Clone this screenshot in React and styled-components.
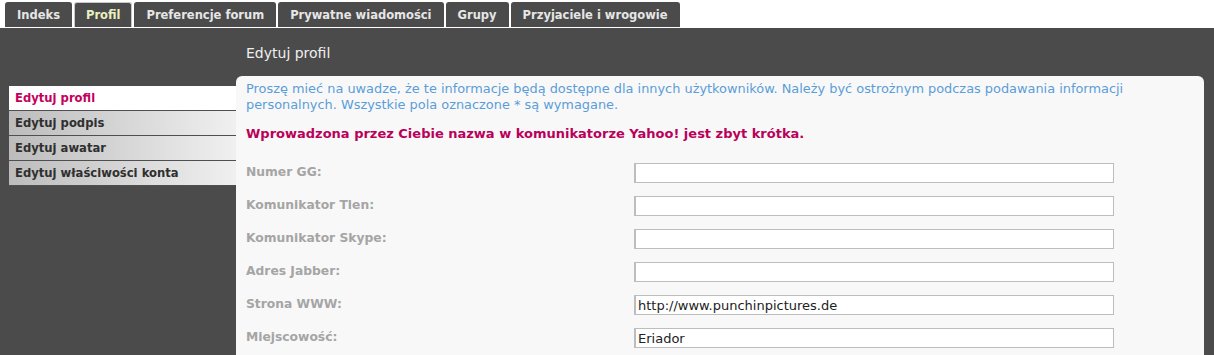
import React from 'react'
import styled, { createGlobalStyle } from 'styled-components'

const Global = createGlobalStyle`
  html, body {
    margin: 0;
    background: #ffffff;
    font-family: "DejaVu Sans", Verdana, sans-serif;
    overflow: hidden;
  }
`

const TabBar = styled.div`
  height: 28px;
  display: flex;
  align-items: flex-end;
  gap: 2px;
  padding-left: 5px;
  background: #ffffff;
`

const Tab = styled.div`
  height: 25px;
  margin-bottom: 1px;
  padding: 0 11px;
  display: flex;
  align-items: center;
  background: #4b4b4b;
  border-radius: 3px 3px 0 0;
  box-sizing: border-box;
  border: 1px solid ${p => (p.active ? '#c8c8c8' : '#4b4b4b')};
  border-bottom: none;
  color: ${p => (p.active ? '#e9f0bf' : '#e6e6e6')};
  font-size: 11.5px;
  font-weight: bold;
  white-space: nowrap;
`

const Main = styled.div`
  display: flex;
  background: #4b4b4b;
  height: 327px;
  padding: 0 10px 0 9px;
`

const Menu = styled.div`
  width: 227px;
  flex-shrink: 0;
  margin-top: 58px;
  align-self: flex-start;
`

const MenuItem = styled.div`
  height: 24px;
  display: flex;
  align-items: center;
  padding-left: 6px;
  border-bottom: 1px solid #4f4f4f;
  background: ${p => (p.active ? '#ffffff' : 'linear-gradient(to right, #bcbcbc, #f0f0f0)')};
  color: ${p => (p.active ? '#c3005b' : '#2f2f2f')};
  font-size: 11.6px;
  font-weight: bold;
  white-space: nowrap;
`

const Content = styled.div`
  flex: 1;
  padding-top: 16px;
  display: flex;
  flex-direction: column;
`

const Heading = styled.h2`
  margin: 0 0 13px;
  padding-left: 10px;
  font-size: 14px;
  line-height: 19px;
  font-weight: normal;
  color: #efefef;
`

const Panel = styled.div`
  flex: 1;
  background: #f8f8f8;
  border-radius: 6px 6px 0 0;
  padding: 5px 10px 0;
`

const Info = styled.p`
  margin: 0 0 13px;
  font-size: 12.9px;
  line-height: 16px;
  color: #5b9dd8;
`

const Error = styled.p`
  margin: 0 0 21px;
  font-size: 13px;
  line-height: 16px;
  font-weight: bold;
  color: #ba005a;
`

const Form = styled.div`
  display: grid;
  grid-template-columns: 388px 480px;
  grid-auto-rows: 20px;
  row-gap: 13px;
  align-items: center;
`

const Label = styled.label`
  font-size: 12.3px;
  line-height: 20px;
  font-weight: bold;
  color: #a5a5a5;
  margin-top: -3px;
`

const Input = styled.input`
  box-sizing: border-box;
  width: 480px;
  height: 20px;
  margin: 0;
  padding: 0 2px;
  border: 1px solid #bdbdbd;
  border-left-width: 2px;
  background: #ffffff;
  font-family: "DejaVu Sans", Verdana, sans-serif;
  font-size: 13px;
  color: #222222;
  outline: none;
`

const tabs = ['Indeks', 'Profil', 'Preferencje forum', 'Prywatne wiadomości', 'Grupy', 'Przyjaciele i wrogowie']
const menu = ['Edytuj profil', 'Edytuj podpis', 'Edytuj awatar', 'Edytuj właściwości konta']
const fields = [
  ['Numer GG:', ''],
  ['Komunikator Tlen:', ''],
  ['Komunikator Skype:', ''],
  ['Adres Jabber:', ''],
  ['Strona WWW:', 'http://www.punchinpictures.de'],
  ['Miejscowość:', 'Eriador'],
]

const App = () => {
  return (
    <>
      <Global />
      <TabBar>
        {tabs.map(t => (
          <Tab key={t} active={t === 'Profil'}>{t}</Tab>
        ))}
      </TabBar>
      <Main>
        <Menu>
          {menu.map((m, i) => (
            <MenuItem key={m} active={i === 0}>{m}</MenuItem>
          ))}
        </Menu>
        <Content>
          <Heading>Edytuj profil</Heading>
          <Panel>
            <Info>
              Proszę mieć na uwadze, że te informacje będą dostępne dla innych użytkowników. Należy być ostrożnym podczas podawania informacji personalnych. Wszystkie pola oznaczone * są wymagane.
            </Info>
            <Error>Wprowadzona przez Ciebie nazwa w komunikatorze Yahoo! jest zbyt krótka.</Error>
            <Form>
              {fields.map(([label, value]) => (
                <React.Fragment key={label}>
                  <Label>{label}</Label>
                  <Input type="text" defaultValue={value} />
                </React.Fragment>
              ))}
            </Form>
          </Panel>
        </Content>
      </Main>
    </>
  )
}

export default App
